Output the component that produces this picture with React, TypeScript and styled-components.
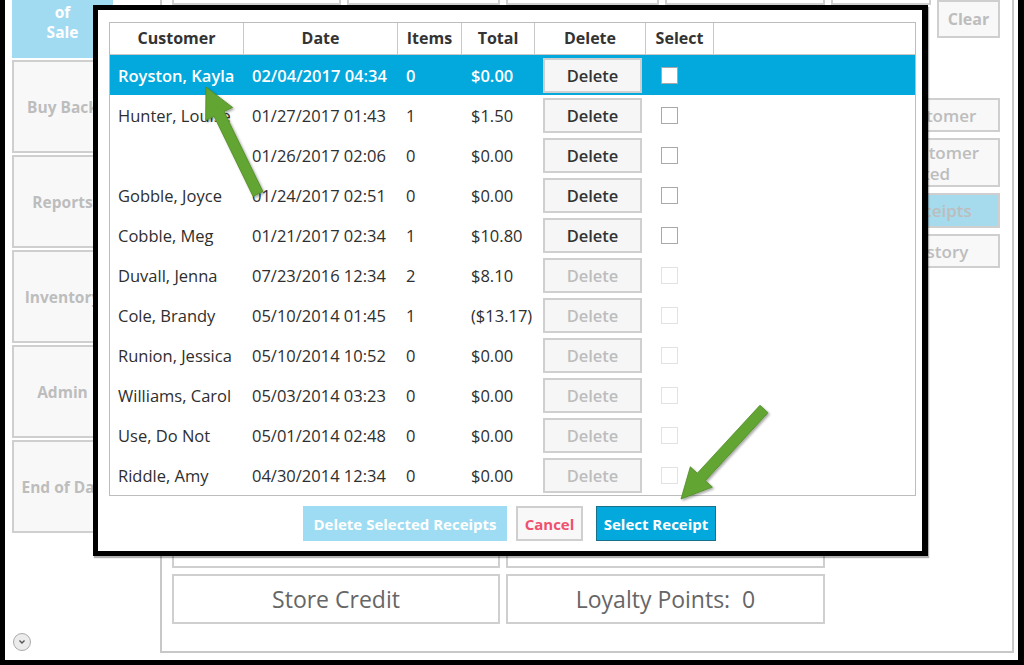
import React from "react";
import styled, { createGlobalStyle } from "styled-components";

const GlobalStyle = createGlobalStyle`
  html, body {
    margin: 0;
    padding: 0;
    width: 1024px;
    height: 665px;
    overflow: hidden;
    background: #fff;
    font-family: "Open Sans", "Noto Sans", "DejaVu Sans", sans-serif;
  }
  * { box-sizing: border-box; }
`;

const RECEIPTS = [
  { customer: "Royston, Kayla", date: "02/04/2017 04:34", items: "0", total: "$0.00", active: true },
  { customer: "Hunter, Louise", date: "01/27/2017 01:43", items: "1", total: "$1.50", active: true },
  { customer: "", date: "01/26/2017 02:06", items: "0", total: "$0.00", active: true },
  { customer: "Gobble, Joyce", date: "01/24/2017 02:51", items: "0", total: "$0.00", active: true },
  { customer: "Cobble, Meg", date: "01/21/2017 02:34", items: "1", total: "$10.80", active: true },
  { customer: "Duvall, Jenna", date: "07/23/2016 12:34", items: "2", total: "$8.10", active: false },
  { customer: "Cole, Brandy", date: "05/10/2014 01:45", items: "1", total: "($13.17)", active: false },
  { customer: "Runion, Jessica", date: "05/10/2014 10:52", items: "0", total: "$0.00", active: false },
  { customer: "Williams, Carol", date: "05/03/2014 03:23", items: "0", total: "$0.00", active: false },
  { customer: "Use, Do Not", date: "05/01/2014 02:48", items: "0", total: "$0.00", active: false },
  { customer: "Riddle, Amy", date: "04/30/2014 12:34", items: "0", total: "$0.00", active: false },
];

const SIDE_ITEMS = [["Point", "of", "Sale"], ["Buy Back"], ["Reports"], ["Inventory"], ["Admin"], ["End of Day"]];

const RIGHT_BUTTONS = [
  { lines: ["New Customer"], h: 34 },
  { lines: ["Clear Customer", "Selected"], h: 49 },
  { lines: ["View Receipts"], h: 35, on: true },
  { lines: ["Sales History"], h: 34 },
];

function arrowPoints(x1: number, y1: number, x2: number, y2: number) {
  const shaft = 5.5;
  const head = 15;
  const headLen = 30;
  const dx = x2 - x1;
  const dy = y2 - y1;
  const len = Math.hypot(dx, dy);
  const ux = dx / len;
  const uy = dy / len;
  const px = -uy;
  const py = ux;
  const bx = x2 - ux * headLen;
  const by = y2 - uy * headLen;
  const pts = [
    [x1 + px * shaft, y1 + py * shaft],
    [bx + px * shaft, by + py * shaft],
    [bx + px * head, by + py * head],
    [x2, y2],
    [bx - px * head, by - py * head],
    [bx - px * shaft, by - py * shaft],
    [x1 - px * shaft, y1 - py * shaft],
  ];
  return pts.map((p) => p.join(",")).join(" ");
}

export default function App() {
  return (
    <Screen>
      <GlobalStyle />
      <Frame>
        <Sidebar>
          {SIDE_ITEMS.map((lines, i) => (
            <SideButton key={i} $active={i === 0}>
              {lines.map((l) => (
                <span key={l}>{l}</span>
              ))}
            </SideButton>
          ))}
          <Chevron>
            <svg width="10" height="10" viewBox="0 0 10 10">
              <path d="M2.5 3.5 L5 6 L7.5 3.5" stroke="#555" strokeWidth="1.4" fill="none" />
            </svg>
          </Chevron>
        </Sidebar>
        <Main>
          <LeftCol>
            <TopBoxes>
              <TopBox $w={169} />
              <TopBox $w={153} />
              <TopBox $w={153} />
              <TopBox $w={160} />
            </TopBoxes>
            <TenderGrid>
              <TenderBox />
              <TenderBox />
              <TenderBox>Store Credit</TenderBox>
              <TenderBox>Loyalty Points:&nbsp; 0</TenderBox>
            </TenderGrid>
          </LeftCol>
          <RightCol>
            <TopRight>
              <TopBox $w={100} />
              <ClearButton>Clear</ClearButton>
            </TopRight>
            <ActionList>
              {RIGHT_BUTTONS.map((b) => (
                <ActionButton key={b.lines[0]} $h={b.h} $on={!!b.on}>
                  {b.lines.map((l) => (
                    <span key={l}>{l}</span>
                  ))}
                </ActionButton>
              ))}
            </ActionList>
          </RightCol>
        </Main>
      </Frame>

      <Modal>
        <Table>
          <HeaderRow>
            <HeadCell>Customer</HeadCell>
            <HeadCell>Date</HeadCell>
            <HeadCell>Items</HeadCell>
            <HeadCell>Total</HeadCell>
            <HeadCell>Delete</HeadCell>
            <HeadCell>Select</HeadCell>
            <HeadCell $last />
          </HeaderRow>
          {RECEIPTS.map((r, i) => (
            <Row key={i} $selected={i === 0}>
              <Cell>{r.customer}</Cell>
              <Cell>{r.date}</Cell>
              <Cell>{r.items}</Cell>
              <Cell $pad={9}>{r.total}</Cell>
              <Cell>
                <DeleteButton $disabled={!r.active}>Delete</DeleteButton>
              </Cell>
              <Cell $pad={15}>
                <Check $disabled={!r.active} />
              </Cell>
              <Cell />
            </Row>
          ))}
        </Table>
        <Footer>
          <DeleteSelected>Delete Selected Receipts</DeleteSelected>
          <CancelButton>Cancel</CancelButton>
          <SelectButton>Select Receipt</SelectButton>
        </Footer>
      </Modal>

      <Arrows width="1024" height="665" viewBox="0 0 1024 665">
        <defs>
          <filter id="sh" x="-20%" y="-20%" width="140%" height="140%">
            <feDropShadow dx="1.5" dy="1.5" stdDeviation="1.2" floodColor="#000" floodOpacity="0.35" />
          </filter>
        </defs>
        <polygon points={arrowPoints(258, 194, 206, 87)} fill="#63a531" stroke="#4e8a24" strokeWidth="0.8" strokeLinejoin="round" filter="url(#sh)" />
        <polygon points={arrowPoints(764, 409, 681, 499)} fill="#63a531" stroke="#4e8a24" strokeWidth="0.8" strokeLinejoin="round" filter="url(#sh)" />
      </Arrows>
    </Screen>
  );
}

const Screen = styled.div`
  position: relative;
  width: 1024px;
  height: 665px;
  overflow: hidden;
`;

const Frame = styled.div`
  width: 1024px;
  height: 665px;
  display: flex;
  background: #fff;
  border-left: 5px solid #000;
  border-right: 6px solid #000;
  border-bottom: 5px solid #000;
`;

const Sidebar = styled.div`
  width: 101px;
  margin-left: 7px;
  display: flex;
  flex-direction: column;
  gap: 2px;
`;

const SideButton = styled.div<{ $active: boolean }>`
  height: 93px;
  flex-shrink: 0;
  display: flex;
  flex-direction: column;
  align-items: center;
  justify-content: center;
  text-align: center;
  white-space: nowrap;
  line-height: 20px;
  font-size: 15.5px;
  font-weight: 700;
  color: ${(p) => (p.$active ? "#fff" : "#bdbdbd")};
  background: ${(p) => (p.$active ? "#a1dbf1" : "#f8f8f8")};
  border: 2px solid ${(p) => (p.$active ? "#a1dbf1" : "#cfcfcf")};
  &:first-child {
    margin-top: -35px;
  }
`;

const Chevron = styled.div`
  margin-top: auto;
  margin-bottom: 9px;
  margin-left: 1px;
  width: 18px;
  height: 18px;
  border-radius: 50%;
  border: 1px solid #aaa;
  background: #ececec;
  display: flex;
  align-items: center;
  justify-content: center;
`;

const Main = styled.div`
  width: 854px;
  height: 653px;
  margin-left: 47px;
  border-left: 2px solid #c8c8c8;
  border-right: 2px solid #c8c8c8;
  border-bottom: 2px solid #c8c8c8;
  padding: 0 12px 0 10px;
  display: grid;
  grid-template-columns: 653px 169px;
  column-gap: 6px;
`;

const LeftCol = styled.div`
  display: flex;
  flex-direction: column;
  padding-bottom: 27px;
`;

const TopBoxes = styled.div`
  display: flex;
  gap: 6px;
`;

const TopBox = styled.div<{ $w: number }>`
  width: ${(p) => p.$w}px;
  height: 30px;
  margin-top: -25px;
  border: 2px solid #cfcfcf;
  background: #fff;
`;

const TenderGrid = styled.div`
  margin-top: auto;
  display: grid;
  grid-template-columns: 328px 319px;
  grid-template-rows: 50px 50px;
  gap: 6px;
`;

const TenderBox = styled.div`
  border: 2px solid #cfcfcf;
  display: flex;
  align-items: center;
  justify-content: center;
  font-size: 23px;
  font-weight: 500;
  color: #666;
`;

const RightCol = styled.div`
  display: flex;
  flex-direction: column;
`;

const TopRight = styled.div`
  display: flex;
  align-items: flex-start;
  gap: 6px;
`;

const ClearButton = styled.div`
  width: 63px;
  height: 38px;
  border: 2px solid #cfcfcf;
  background: #f8f8f8;
  display: flex;
  align-items: center;
  justify-content: center;
  font-size: 16px;
  font-weight: 700;
  color: #bdbdbd;
`;

const ActionList = styled.div`
  margin-top: 60px;
  display: flex;
  flex-direction: column;
  gap: 6px;
`;

const ActionButton = styled.div<{ $h: number; $on: boolean }>`
  height: ${(p) => p.$h}px;
  border: 2px solid #cfcfcf;
  background: ${(p) => (p.$on ? "#a6dbee" : "#f8f8f8")};
  display: flex;
  flex-direction: column;
  align-items: center;
  justify-content: center;
  white-space: nowrap;
  line-height: 21px;
  font-size: 17px;
  font-weight: 600;
  color: #bdbdbd;
`;

const Modal = styled.div`
  position: absolute;
  left: 93px;
  top: 5px;
  width: 835px;
  height: 551px;
  background: #fff;
  border: 5px solid #000;
  border-right-width: 6px;
  box-shadow: 1px 2px 1px rgba(0, 0, 0, 0.3);
  padding: 12px 0 0 11px;
  display: flex;
  flex-direction: column;
`;

const COLS = "134px 154px 64px 73px 111px 68px 1fr";

const Table = styled.div`
  width: 807px;
  border: 1px solid #bdbdbd;
`;

const HeaderRow = styled.div`
  display: grid;
  grid-template-columns: ${COLS};
  height: 32px;
  border-bottom: 1px solid #c8c8c8;
`;

const HeadCell = styled.div<{ $last?: boolean }>`
  display: flex;
  align-items: center;
  justify-content: center;
  padding-bottom: 1px;
  font-size: 16px;
  font-weight: 700;
  color: #333;
  border-right: ${(p) => (p.$last ? "none" : "1px solid #c8c8c8")};
`;

const Row = styled.div<{ $selected: boolean }>`
  display: grid;
  grid-template-columns: ${COLS};
  height: 40px;
  align-items: center;
  background: ${(p) => (p.$selected ? "#03a8dc" : "transparent")};
  color: ${(p) => (p.$selected ? "#fff" : "#2e2e2e")};
  font-weight: ${(p) => (p.$selected ? 600 : 400)};
`;

const Cell = styled.div<{ $pad?: number }>`
  padding-left: ${(p) => p.$pad ?? 8}px;
  font-size: 16.5px;
  white-space: nowrap;
  display: flex;
  align-items: center;
`;

const DeleteButton = styled.div<{ $disabled: boolean }>`
  width: 99px;
  height: 35px;
  border: 2px solid #cfcfcf;
  background: #f6f6f6;
  display: flex;
  align-items: center;
  justify-content: center;
  font-size: 16.5px;
  font-weight: 600;
  color: ${(p) => (p.$disabled ? "#bdbdbd" : "#333")};
`;

const Check = styled.div<{ $disabled: boolean }>`
  width: 17px;
  height: 17px;
  background: #fff;
  border: 1px solid ${(p) => (p.$disabled ? "#e2e2e2" : "#a8a8a8")};
`;

const Footer = styled.div`
  margin-top: 10px;
  padding-left: 194px;
  display: flex;
  gap: 9px;
`;

const FooterButton = styled.div`
  height: 35px;
  display: flex;
  align-items: center;
  justify-content: center;
  font-size: 15px;
  font-weight: 700;
`;

const DeleteSelected = styled(FooterButton)`
  width: 204px;
  background: #9ddcf2;
  border: 1px solid #9ddcf2;
  color: #fff;
`;

const CancelButton = styled(FooterButton)`
  width: 67px;
  background: #f8f8f8;
  border: 2px solid #cfcfcf;
  color: #f0506e;
  margin-right: 4px;
`;

const SelectButton = styled(FooterButton)`
  width: 120px;
  background: #03a8dc;
  border: 1px solid #1a6f8a;
  color: #fff;
`;

const Arrows = styled.svg`
  position: absolute;
  left: 0;
  top: 0;
  pointer-events: none;
`;
